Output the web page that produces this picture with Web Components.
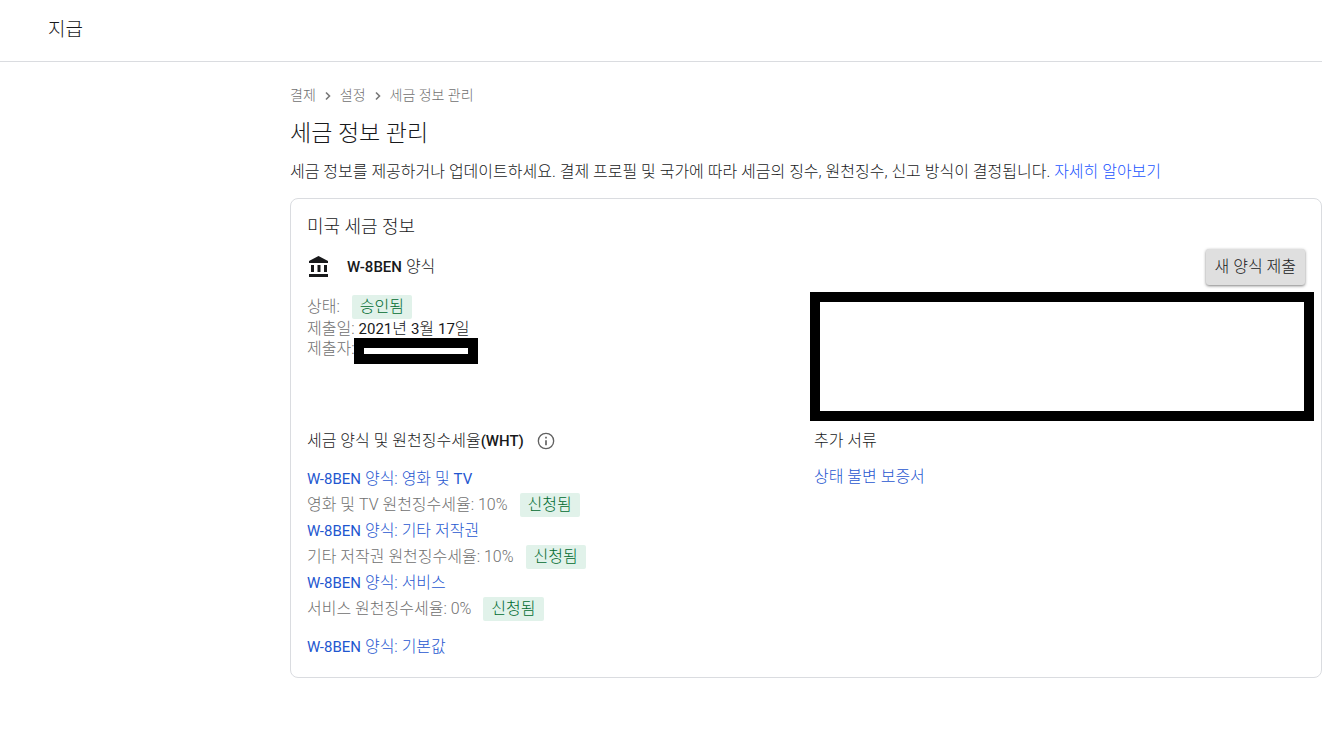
<!DOCTYPE html>
<html lang="ko">
<head>
<meta charset="utf-8">
<meta name="viewport" content="width=device-width, initial-scale=1">
<title>세금 정보 관리</title>
<style>
  :root {
    --clr-text: #18191b;
    --clr-muted: #707070;
    --clr-link: #1f57d0;
    --clr-border: #dadce0;
    --clr-badge: #e1f2ea;
    --clr-badge-text: #006b30;
  }
  body {
    margin: 0;
    background: #fff;
    color: var(--clr-text);
    font: 300 16px/20px Roboto, "Noto Sans CJK KR", sans-serif;
  }
</style>
</head>
<body>
<tax-page></tax-page>

<script>
class BaseElement extends HTMLElement {
  constructor() {
    super();
    const template = document.createElement("template");
    template.innerHTML = this.template();
    this.attachShadow({mode: "open"})
      .append(template.content.cloneNode(true));
  }
}

class PageHeader extends BaseElement {
  template() {
    return `
      <style>
        :host {
          display: block;
          border-bottom: 1px solid var(--clr-border);
        }
        header {
          padding: 18px 48px 19px;
          font-size: 19px;
          line-height: 24px;
        }
      </style>
      <header><slot></slot></header>
    `;
  }
}

class BreadCrumbs extends BaseElement {
  template() {
    return `
      <style>
        :host {
          display: block;
          color: var(--clr-muted);
          font-size: 14px;
        }
        nav {
          display: flex;
          align-items: center;
          gap: 8px;
        }
        a { color: inherit; text-decoration: none; }
        svg { width: 8px; height: 10px; margin-top: 2px; fill: none; stroke: #777; stroke-width: 1.600; }
      </style>
      <nav aria-label="탐색경로">
        <a href="#">결제</a>
        <svg viewBox="0 0 8 10"><path d="M2 1.500l3.500 3.500-3.500 3.500"/></svg>
        <a href="#">설정</a>
        <svg viewBox="0 0 8 10"><path d="M2 1.500l3.500 3.500-3.500 3.500"/></svg>
        <span>세금 정보 관리</span>
      </nav>
    `;
  }
}

class TextLink extends BaseElement {
  template() {
    return `
      <style>
        :host { display: inline; }
        a { color: var(--clr-link); text-decoration: none; }
        a:hover { text-decoration: underline; }
      </style>
      <a href="#"><slot></slot></a>
    `;
  }
}

class StatusBadge extends BaseElement {
  template() {
    return `
      <style>
        :host {
          display: inline-block;
          padding: 0 8px;
          border-radius: 2px;
          background: var(--clr-badge);
          color: var(--clr-badge-text);
          line-height: 24px;
        }
      </style>
      <slot></slot>
    `;
  }
}

class RaisedButton extends BaseElement {
  template() {
    return `
      <style>
        :host { display: block; }
        button {
          height: 36px;
          padding: 0 9px;
          border: 0;
          border-radius: 3px;
          background: #dfdfdf;
          color: inherit;
          font: inherit;
          box-shadow: 0 1px 3px rgba(0, 0, 0, .5);
          cursor: pointer;
        }
      </style>
      <button type="button"><slot></slot></button>
    `;
  }
}

// Empty black frame laid over private details.
class RedactedBox extends BaseElement {
  template() {
    return `
      <style>
        :host {
          position: absolute;
          box-sizing: border-box;
          border: 10px solid #000;
          background: #fff;
        }
      </style>
    `;
  }
}

class TaxRate extends BaseElement {
  template() {
    return `
      <style>
        :host { display: block; line-height: 26px; }
        .rate {
          display: flex;
          align-items: center;
          gap: 12px;
          height: 26px;
          color: var(--clr-muted);
        }
      </style>
      <text-link><slot name="form"></slot></text-link>
      <div class="rate">
        <slot name="rate"></slot>
        <status-badge>신청됨</status-badge>
      </div>
    `;
  }
}

class TaxCard extends BaseElement {
  template() {
    return `
      <style>
        :host {
          display: block;
          padding: 16px;
          border: 1px solid var(--clr-border);
          border-radius: 8px;
        }
        h2, h3 { margin: 0; font-weight: inherit; }
        h2 { font-size: 18px; line-height: 24px; }
        h3 {
          display: flex;
          align-items: center;
          gap: 12px;
          font-size: inherit;
        }
        b { font-size: 15px; font-weight: 500; }
        text-link b, tax-rate b, time b { font-weight: 400; }
        .form {
          display: flex;
          justify-content: space-between;
          align-items: center;
          margin-top: 8px;
          height: 40px;
        }
        .form h3 { gap: 16px; }
        .bank { width: 24px; height: 24px; fill: currentColor; }
        .info { width: 20px; height: 20px; fill: #616161; }
        .columns {
          display: grid;
          grid-template-columns: 1fr 1fr;
          gap: 16px;
        }
        .details {
          position: relative;
          height: 136px;
          margin-top: 8px;
        }
        dl { margin: 0; }
        dl div { display: flex; gap: 4px; }
        dl .status { align-items: center; gap: 12px; height: 24px; }
        dt { color: var(--clr-muted); }
        dd { margin: 0; }
        .owner { position: relative; }
        .owner redacted-box {
          top: -1px;
          left: 47px;
          width: 124px;
          height: 26px;
        }
        .address redacted-box { inset: -3px -9px 10px -4px; }
        .rates { padding-top: 15px; }
        .default { margin: 12px 0 1px; line-height: 26px; }
        .extra { padding-top: 16px; }
      </style>
      <h2>미국 세금 정보</h2>
      <div class="form">
        <h3>
          <svg class="bank" viewBox="0 0 24 24"><path d="M4 10v7h3v-7H4zm6.500 0v7h3v-7h-3zM2 22h19v-3H2v3zm15-12v7h3v-7h-3zm-5.500-9L2 6v2h19V6l-9.500-5z"/></svg>
          <span><b>W-8BEN</b> 양식</span>
        </h3>
        <raised-button>새 양식 제출</raised-button>
      </div>
      <div class="columns">
        <div class="details">
          <dl>
            <div class="status"><dt>상태:</dt><dd><status-badge>승인됨</status-badge></dd></div>
            <div><dt>제출일:</dt><dd><time datetime="2021-03-17"><b>2021</b>년 <b>3</b>월 <b>17</b>일</time></dd></div>
            <div class="owner"><dt>제출자:</dt><dd><redacted-box></redacted-box></dd></div>
          </dl>
        </div>
        <div class="details address"><redacted-box></redacted-box></div>
      </div>
      <div class="columns">
        <section>
          <h3>
            <span>세금 양식 및 원천징수세율<b>(WHT)</b></span>
            <svg class="info" viewBox="0 0 24 24"><path d="M11 17h2v-6h-2v6zm1-15a10 10 0 1 0 0 20 10 10 0 0 0 0-20zm0 18.400a8.400 8.400 0 1 1 0-16.800 8.400 8.400 0 0 1 0 16.800zM11 9h2V7h-2v2z"/></svg>
          </h3>
          <div class="rates">
            <tax-rate><span slot="form"><b>W-8BEN</b> 양식: 영화 및 <b>TV</b></span><span slot="rate">영화 및 TV 원천징수세율: 10%</span></tax-rate>
            <tax-rate><span slot="form"><b>W-8BEN</b> 양식: 기타 저작권</span><span slot="rate">기타 저작권 원천징수세율: 10%</span></tax-rate>
            <tax-rate><span slot="form"><b>W-8BEN</b> 양식: 서비스</span><span slot="rate">서비스 원천징수세율: 0%</span></tax-rate>
          </div>
          <div class="default"><text-link><b>W-8BEN</b> 양식: 기본값</text-link></div>
        </section>
        <section>
          <h3>추가 서류</h3>
          <div class="extra"><text-link>상태 불변 보증서</text-link></div>
        </section>
      </div>
    `;
  }
}

class TaxPage extends BaseElement {
  template() {
    return `
      <style>
        :host { display: block; }
        main { padding: 23px 0 24px 290px; }
        h1 {
          margin: 16px 0 0;
          font-size: 23px;
          font-weight: inherit;
          line-height: 25px;
        }
        p { margin: 16px 0; }
        p text-link { --clr-link: #1a55ff; }
      </style>
      <page-header>지급</page-header>
      <main>
        <bread-crumbs></bread-crumbs>
        <h1>세금 정보 관리</h1>
        <p>세금 정보를 제공하거나 업데이트하세요. 결제 프로필 및 국가에 따라 세금의 징수, 원천징수, 신고 방식이 결정됩니다. <text-link>자세히 알아보기</text-link></p>
        <tax-card></tax-card>
      </main>
    `;
  }
}

customElements.define("page-header", PageHeader);
customElements.define("bread-crumbs", BreadCrumbs);
customElements.define("text-link", TextLink);
customElements.define("status-badge", StatusBadge);
customElements.define("raised-button", RaisedButton);
customElements.define("redacted-box", RedactedBox);
customElements.define("tax-rate", TaxRate);
customElements.define("tax-card", TaxCard);
customElements.define("tax-page", TaxPage);
</script>
</body>
</html>
